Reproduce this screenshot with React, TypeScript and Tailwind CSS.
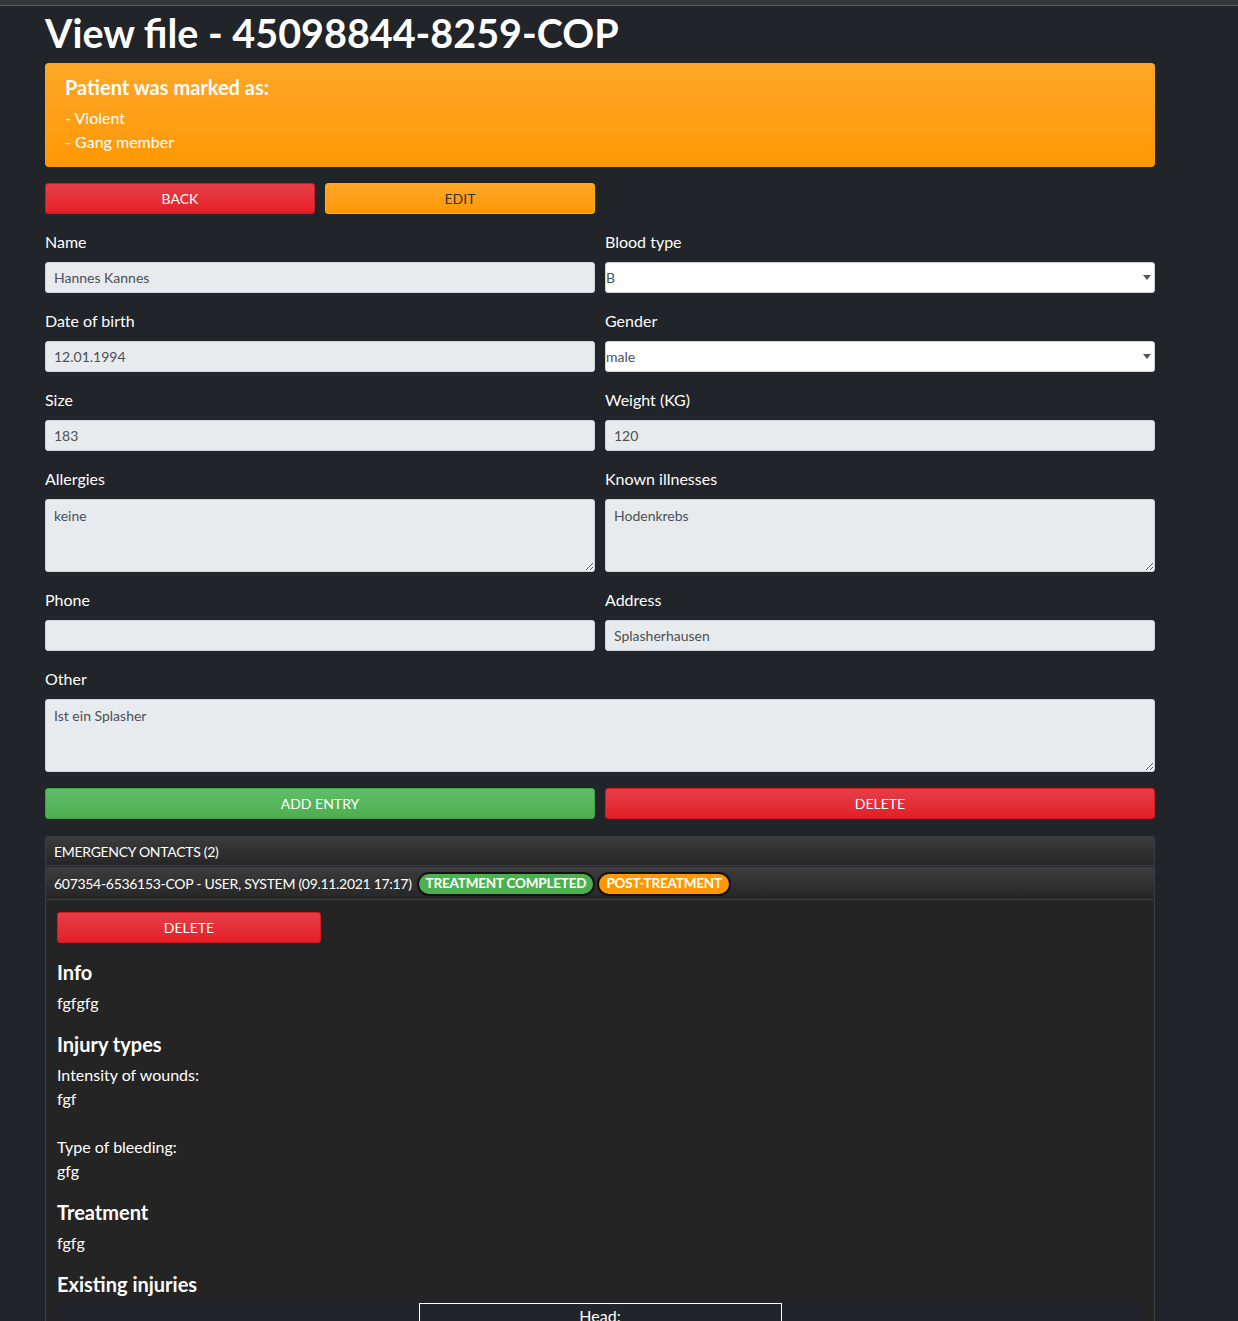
import React from "react";

const font = { fontFamily: "Lato, 'Noto Sans', sans-serif" };

function Field({ label, value, select, area }: { label: string; value: string; select?: boolean; area?: boolean }) {
  return (
    <div className="flex flex-col">
      <label className="text-[16px] leading-[24px] text-white mb-[8px]">{label}</label>
      {select ? (
        <div className="relative">
          <select
            disabled
            defaultValue={value}
            className="w-full h-[31px] bg-white border border-[#ced4da] rounded-[3px] text-[14px] text-[#495057] pl-0 appearance-none opacity-100"
          >
            <option value={value}>{value}</option>
          </select>
          <svg className="absolute right-[4px] top-[13px]" width="8" height="5" viewBox="0 0 8 5">
            <path d="M0 0h8L4 5z" fill="#555" />
          </svg>
        </div>
      ) : area ? (
        <textarea
          readOnly
          defaultValue={value}
          className="w-full h-[73px] bg-[#e8ebee] border border-[#ced4da] rounded-[3px] text-[14px] text-[#495057] px-[8px] py-[6px] leading-[20px]"
        />
      ) : (
        <input
          readOnly
          defaultValue={value}
          className="w-full h-[31px] bg-[#e8ebee] border border-[#ced4da] rounded-[3px] text-[14px] text-[#495057] px-[8px]"
        />
      )}
    </div>
  );
}

export default function App() {
  return (
    <div className="min-h-screen bg-[#212428] pb-10" style={font}>
      <div className="h-[5px] bg-[#333536]" />
      <div className="h-px bg-[#595b5d]" />
      <div className="ml-[45px] w-[1110px]">
        <h1 className="text-[39.5px] leading-[48px] font-bold text-white mt-[3px]">View file - 45098844-8259-COP</h1>

        <div className="mt-[6px] rounded-[4px] bg-gradient-to-b from-[#ffa726] to-[#ff9800] px-[20px] pt-[12px] pb-[13px] text-white">
          <h4 className="text-[20px] leading-[24px] font-bold mb-[7px]">Patient was marked as:</h4>
          <p className="text-[16px] leading-[24px]">- Violent</p>
          <p className="text-[16px] leading-[24px]">- Gang member</p>
        </div>

        <div className="mt-[16px] flex gap-[10px]">
          <button className="w-[270px] h-[31px] rounded-[3px] bg-gradient-to-b from-[#e63d47] to-[#e41d25] border border-[#d11a22] text-white text-[14px]">BACK</button>
          <button className="w-[270px] h-[31px] rounded-[3px] bg-gradient-to-b from-[#ffa726] to-[#ff9800] border border-[#f5b800] text-[#333] text-[14px]">EDIT</button>
        </div>

        <div className="mt-[16px] grid grid-cols-2 gap-x-[10px] gap-y-[16px]">
          <Field label="Name" value="Hannes Kannes" />
          <Field label="Blood type" value="B" select />
          <Field label="Date of birth" value="12.01.1994" />
          <Field label="Gender" value="male" select />
          <Field label="Size" value="183" />
          <Field label="Weight (KG)" value="120" />
          <Field label="Allergies" value="keine" area />
          <Field label="Known illnesses" value="Hodenkrebs" area />
          <Field label="Phone" value="" />
          <Field label="Address" value="Splasherhausen" />
          <div className="col-span-2">
            <Field label="Other" value="Ist ein Splasher" area />
          </div>
        </div>

        <div className="mt-[16px] grid grid-cols-2 gap-x-[10px]">
          <button className="h-[31px] rounded-[3px] bg-gradient-to-b from-[#5fbd67] to-[#4caf50] border border-[#43a047] text-white text-[14px]">ADD ENTRY</button>
          <button className="h-[31px] rounded-[3px] bg-gradient-to-b from-[#e63d47] to-[#e41d25] border border-[#d11a22] text-white text-[14px]">DELETE</button>
        </div>

        {/* Emergency contacts */}
        <div className="mt-[17px] h-[30px] flex items-center px-[8px] rounded-t-[3px] border border-[#3a3d41] bg-gradient-to-b from-[#3c3c3c] to-[#262626] text-white text-[14px] tracking-[-0.3px]">
          EMERGENCY ONTACTS (2)
        </div>
        <div className="mt-px h-[33px] flex items-center gap-[5px] px-[8px] border border-[#3a3d41] bg-gradient-to-b from-[#3c3c3c] to-[#262626] text-white text-[14px] tracking-[-0.3px]">
          <span>607354-6536153-COP - USER, SYSTEM (09.11.2021 17:17)</span>
          <span className="h-[24px] flex items-center px-[7px] rounded-full border-2 border-[#111] bg-[#4caf50] text-white font-bold text-[13.5px] tracking-[-0.2px]">TREATMENT COMPLETED</span>
          <span className="-ml-[3px] h-[24px] flex items-center px-[7px] rounded-full border-2 border-[#111] bg-[#ff9800] text-white font-bold text-[13.5px] tracking-[-0.2px]">POST-TREATMENT</span>
        </div>
        <div className="border-x border-[#3a3d41] bg-[#242424] pl-[11px] pr-[11px] pt-[12px] pb-[20px] text-white">
          <button className="w-[264px] h-[31px] rounded-[3px] bg-gradient-to-b from-[#e63d47] to-[#e41d25] border border-[#d11a22] text-white text-[14px]">DELETE</button>
          <h5 className="mt-[17px] text-[20px] leading-[24px] font-bold mb-[7px]">Info</h5>
          <p className="text-[16px] leading-[24px]">fgfgfg</p>
          <h5 className="mt-[17px] text-[20px] leading-[24px] font-bold mb-[7px]">Injury types</h5>
          <p className="text-[16px] leading-[24px]">Intensity of wounds:</p>
          <p className="text-[16px] leading-[24px]">fgf</p>
          <div className="h-[24px]" />
          <p className="text-[16px] leading-[24px]">Type of bleeding:</p>
          <p className="text-[16px] leading-[24px]">gfg</p>
          <h5 className="mt-[17px] text-[20px] leading-[24px] font-bold mb-[7px]">Treatment</h5>
          <p className="text-[16px] leading-[24px]">fgfg</p>
          <h5 className="mt-[17px] text-[20px] leading-[24px] font-bold">Existing injuries</h5>
          <div className="mt-[6px] bg-[#212529] pt-px pb-[20px] flex justify-center">
            <div className="w-[363px] border border-white text-center text-[16px] leading-[24px] pb-[40px]">Head:</div>
          </div>
        </div>
      </div>
    </div>
  );
}
